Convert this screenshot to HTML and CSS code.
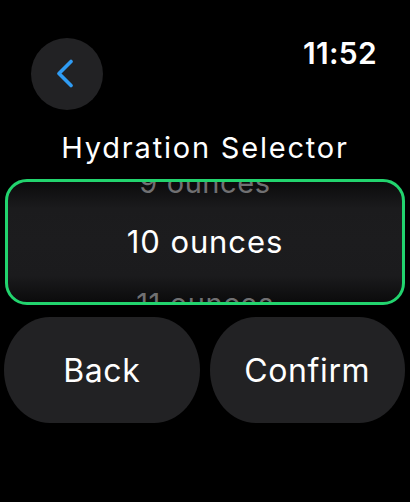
FILE: index.html
```html
<!DOCTYPE html>
<html lang="en">
<head>
    <meta charset="UTF-8">
    <meta name="viewport" content="width=device-width, initial-scale=1.0">
    <title>Hydration Selector</title>
    <link rel="stylesheet" href="styles.css">
</head>
<body>
    <div class="screen">
        <div class="top-bar">
            <button class="nav-back" aria-label="Back">
                <svg width="20" height="30" viewBox="0 0 20 30">
                    <path d="M16 2.5 L4 14.5 L16 26.5" fill="none" stroke="#2f9cf4" stroke-width="3.6" stroke-linecap="round" stroke-linejoin="round"/>
                </svg>
            </button>
            <div class="clock">11:52</div>
        </div>

        <h1 class="title">Hydration Selector</h1>

        <div class="picker">
            <div class="picker-item faded">9 ounces</div>
            <div class="picker-item selected">10 ounces</div>
            <div class="picker-item faded">11 ounces</div>
        </div>

        <div class="actions">
            <button class="action">Back</button>
            <button class="action">Confirm</button>
        </div>
    </div>
</body>
</html>
```

FILE: styles.css
```css
body {
    margin: 0;
    padding: 0;
    background-color: #000;
    color: #fff;
    font-family: Inter, "Noto Sans", sans-serif;
}

.screen {
    width: 410px;
    height: 502px;
    overflow: hidden;
}

.top-bar {
    display: flex;
    justify-content: space-between;
    align-items: flex-start;
    padding: 38px 33px 0 31px;
}

.nav-back {
    width: 72px;
    height: 72px;
    border: none;
    border-radius: 50%;
    background-color: #222224;
    padding: 0 4px 0 0;
    display: flex;
    align-items: center;
    justify-content: center;
}

.clock {
    font-size: 30px;
    font-weight: 600;
    line-height: 30px;
    letter-spacing: 0.3px;
}

.title {
    margin: 21px 0 0;
    font-size: 29px;
    font-weight: 400;
    line-height: 34px;
    text-align: center;
    letter-spacing: 1.8px;
}

.picker {
    margin: 14px 5px 0;
    height: 120px;
    border: 3px solid #22d46e;
    border-radius: 22px;
    background: linear-gradient(#0b0b0c 0%, #1b1b1d 22%, #1c1c1e 50%, #1b1b1d 78%, #0b0b0c 100%);
    display: flex;
    flex-direction: column;
    justify-content: center;
    overflow: hidden;
}

.picker-item {
    flex: none;
    height: 60px;
    line-height: 60px;
    padding-top: 2px;
    text-align: center;
    font-size: 31px;
    letter-spacing: 0.9px;
}

.picker-item.faded {
    color: #707072;
    font-size: 29px;
    letter-spacing: 0.6px;
}

.picker-item.faded:first-child {
    margin-bottom: -3px;
}

.actions {
    display: flex;
    gap: 10px;
    margin: 12px 5px 0 4px;
}

.action {
    flex: 1;
    height: 106px;
    border: none;
    border-radius: 46px / 53px;
    background-color: #222224;
    color: #fff;
    font-family: Inter, "Noto Sans", sans-serif;
    font-size: 32px;
    letter-spacing: 0.6px;
}
```
